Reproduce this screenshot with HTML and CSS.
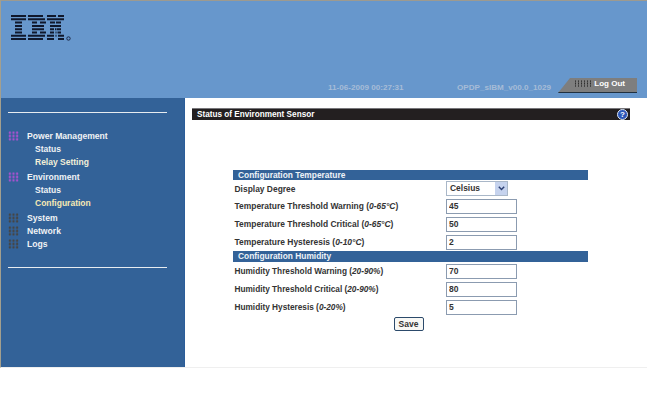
FILE: index.html
```html
<!DOCTYPE html>
<html lang="en">
<head>
<meta charset="utf-8">
<title>Status of Environment Sensor</title>
<link rel="stylesheet" href="styles.css">
</head>
<body>
<div class="app">
  <header class="top">
    <svg class="logo" width="62" height="28" viewBox="0 0 62 28" aria-label="IBM">
      <path class="logo-bars" d="M0 0h15v2H0zM17 0h15v2H17zM36 0h9v2H36zM47 0h6v2H47z
      M0 3.3h15v2H0zM17 3.3h17v2H17zM36 3.3h10v2H36zM46 3.3h7v2H46z
      M4 6.6h7v2H4zM21 6.6h5v2H21zM29 6.6h6v2H29zM39 6.6h5v2H39zM45 6.6h5v2H45z
      M4 9.9h7v2H4zM21 9.9h12v2H21zM39 9.9h11v2H39z
      M4 13.2h7v2H4zM21 13.2h12v2H21zM39 13.2h4v2H39zM44 13.2h1.500v2H44zM46 13.2h4v2H46z
      M4 16.500h7v2H4zM21 16.500h5v2H21zM29 16.500h6v2H29zM39 16.500h4v2H39zM44.500 16.500h1v2H44.500zM46.500 16.500h3.500v2H46.500z
      M0 19.800h15v2H0zM17 19.800h17v2H17zM36 19.800h7v2H36zM44.500 19.800h1v2H44.500zM47 19.800h6v2H47z
      M0 23.100h15v2H0zM17 23.100h15v2H17zM36 23.100h7v2H36zM47 23.100h6v2H47z"/>
      <circle class="logo-r" cx="57.500" cy="23.500" r="1.700"/>
    </svg>
    <div class="meta">
      <span class="date">11-06-2009 00:27:31</span>
      <span class="version">OPDP_sIBM_v00.0_1029</span>
      <a class="logout" href="#"><span class="dots dots-small"></span>Log Out</a>
    </div>
  </header>
  <div class="body">
    <nav class="side">
      <hr class="rule rule-top">
      <ul class="menu">
        <li class="item open"><span class="dots dots-purple"></span>Power Management</li>
        <li class="sub">Status</li>
        <li class="sub sub-alt">Relay Setting</li>
        <li class="item open item-gap"><span class="dots dots-purple"></span>Environment</li>
        <li class="sub">Status</li>
        <li class="sub sub-alt active">Configuration</li>
        <li class="item item-gap"><span class="dots"></span>System</li>
        <li class="item"><span class="dots"></span>Network</li>
        <li class="item"><span class="dots"></span>Logs</li>
      </ul>
      <hr class="rule rule-bottom">
    </nav>
    <main class="content">
      <div class="title">
        <span>Status of Environment Sensor</span>
        <span class="help">?</span>
      </div>
      <form class="form">
        <div class="bar">Configuration Temperature</div>
        <div class="row row-select">
          <label>Display Degree</label>
          <span class="select">Celsius<span class="arrow"><svg width="7" height="5" viewBox="0 0 7 5"><path d="M.8.8l2.700 2.700L6.200.8" fill="none" stroke="#2b3f73" stroke-width="1.500"/></svg></span></span>
        </div>
        <div class="row"><label>Temperature Threshold Warning (<i>0-65°C</i>)</label><input value="45"></div>
        <div class="row"><label>Temperature Threshold Critical (<i>0-65°C</i>)</label><input value="50"></div>
        <div class="row"><label>Temperature Hysteresis (<i>0-10°C</i>)</label><input value="2"></div>
        <div class="bar bar-second">Configuration Humidity</div>
        <div class="row row-tight"><label>Humidity Threshold Warning (<i>20-90%</i>)</label><input value="70"></div>
        <div class="row row-tight"><label>Humidity Threshold Critical (<i>20-90%</i>)</label><input value="80"></div>
        <div class="row row-tight"><label>Humidity Hysteresis (<i>0-20%</i>)</label><input value="5"></div>
        <div class="actions"><button type="button">Save</button></div>
      </form>
    </main>
  </div>
</div>
</body>
</html>
```
FILE: styles.css
```css
* { box-sizing: border-box; }
html, body { margin: 0; padding: 0; background: #fff; }
body { font: bold 8.500px "Liberation Sans", Arial, sans-serif; width: 648px; height: 415px; overflow: hidden; }

.app {
  width: 647px;
  height: 368px;
  border-top: 1px solid #9d9a8f;
  border-left: 1px solid #a39f8e;
  border-bottom: 1px solid #efefef;
  display: flex;
  flex-direction: column;
}

.top {
  height: 97px;
  background: #6797cc;
  display: flex;
  flex-direction: column;
  justify-content: space-between;
  padding: 14px 10px 5px 10px;
}
.logo { display: block; }
.logo-bars { fill: #10182c; }
.logo-r { fill: none; stroke: #1c2a4a; stroke-width: 1; }

.meta { display: flex; align-items: flex-end; height: 15px; color: #a6bcd7; font-size: 8.100px; font-weight: bold; padding-left: 317px; }
.date { width: 129px; line-height: 11px; margin-right: 0; }
.version { width: 101px; line-height: 11px; white-space: nowrap; }
.logout {
  width: 79px;
  height: 15px;
  background: #7e7e7e;
  border-bottom: 1px solid #20303f;
  clip-path: polygon(12px 0, 100% 0, 100% 100%, 0 100%);
  color: #fff;
  font-weight: bold;
  font-size: 8px;
  text-decoration: none;
  display: flex;
  align-items: center;
  justify-content: flex-end;
  padding: 0 12px 3px 0;
}

.dots {
  display: block;
  width: 11px;
  height: 10px;
  background-image: radial-gradient(circle at center, #454545 0, #454545 1.100px, transparent 1.500px);
  background-size: 3.660px 3.330px;
  flex: none;
}
.dots-purple { background-image: radial-gradient(circle at center, #a652cf 0, #a652cf 1.100px, transparent 1.500px); }
.dots-small {
  width: 18px;
  height: 7px;
  margin-right: 2px;
  background-image: radial-gradient(circle at center, #2b2b2b 0, #2b2b2b .6px, transparent 1px);
  background-size: 3px 2.400px;
}

.body { flex: 1; display: flex; min-height: 0; }

.side { width: 184px; background: #336298; border-right: 1px solid #2b5d99; padding: 14px 0 0 7px; color: #f0f2f5; }
.rule { width: 159px; height: 1px; margin: 0; border: 0; background: #e8ecf0; }
.menu { list-style: none; margin: 16px 0 0; padding: 0; }
.item { display: flex; align-items: center; height: 13px; gap: 8px; font-size: 8.600px; }
.item.open { margin-bottom: 1px; }
.item-gap { margin-top: 2px; }
.sub { height: 12.500px; line-height: 12.500px; padding-left: 27px; }
.sub-alt { color: #f4f0d8; }
.active { color: #f6e9b4; }
.rule-bottom { margin-top: 17px; }

.content { flex: 1; padding: 10px 17px 0 7px; background: #fff; }
.title {
  height: 12px;
  width: 438px;
  background: #231f20;
  border-top: 1px solid #77767a;
  color: #fff;
  font-size: 8.200px;
  display: flex;
  justify-content: space-between;
  align-items: center;
  padding: 0 2px 0 5px;
}
.help {
  width: 11px;
  height: 11px;
  border-radius: 50%;
  background: #2c57b8;
  border: 1px solid #dfe8f5;
  color: #fff;
  font-size: 8px;
  line-height: 9px;
  text-align: center;
}

.form { width: 355px; margin: 50px 0 0 41px; color: #333; }
.bar { height: 10px; background: #336298; color: #eef2f7; line-height: 10px; padding-left: 5px; font-size: 8.400px; }
.bar-second { height: 11px; line-height: 11px; }
.row { height: 18px; display: grid; grid-template-columns: 211.500px 71px; align-items: center; padding-left: 1.500px; font-size: 8.450px; }
.row-select { height: 17px; }
.row-tight { font-size: 8.250px; }
.row input {
  width: 71px;
  height: 15px;
  margin: 0;
  border: 1px solid #8b9bb0;
  padding: 0 2px;
  font: bold 8.500px "Liberation Sans", Arial, sans-serif;
  color: #333;
  background: #fff;
}
.select {
  display: block;
  position: relative;
  width: 62px;
  height: 15px;
  border: 1px solid #a9b7c8;
  padding-left: 3px;
  line-height: 13px;
  color: #333;
}
.arrow {
  position: absolute;
  right: 0;
  top: 0;
  width: 12px;
  height: 13px;
  background: #c6d3ee;
  display: flex;
  align-items: center;
  justify-content: center;
}
.actions { display: flex; justify-content: center; padding: 1px 4px 0 0; }
.actions button {
  width: 30px;
  height: 14px;
  padding: 0;
  border: 1px solid #2c4a6b;
  border-radius: 2px;
  background: #f8f8f5;
  font: bold 8.500px "Liberation Sans", Arial, sans-serif;
  color: #333;
  line-height: 11px;
}
```
